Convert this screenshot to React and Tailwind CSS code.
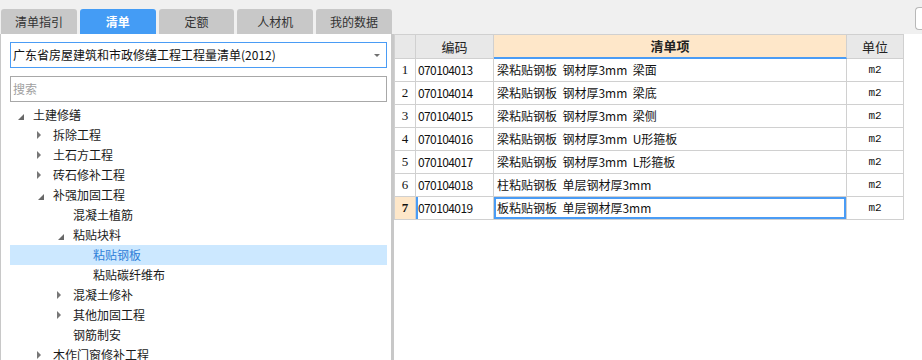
import React from 'react';

const tabs = ['清单指引', '清单', '定额', '人材机', '我的数据'];

const tree = [
  { level: 0, state: 'open', label: '土建修缮' },
  { level: 1, state: 'closed', label: '拆除工程' },
  { level: 1, state: 'closed', label: '土石方工程' },
  { level: 1, state: 'closed', label: '砖石修补工程' },
  { level: 1, state: 'open', label: '补强加固工程' },
  { level: 2, state: 'leaf', label: '混凝土植筋' },
  { level: 2, state: 'open', label: '粘贴块料' },
  { level: 3, state: 'leaf', label: '粘贴钢板', selected: true },
  { level: 3, state: 'leaf', label: '粘贴碳纤维布' },
  { level: 2, state: 'closed', label: '混凝土修补' },
  { level: 2, state: 'closed', label: '其他加固工程' },
  { level: 2, state: 'leaf', label: '钢筋制安' },
  { level: 1, state: 'closed', label: '木作门窗修补工程' },
];

const indent = ['pl-[3px]', 'pl-[23px]', 'pl-[43px]', 'pl-[63px]'];

const rows = [
  { code: '070104013', name: '梁粘贴钢板  钢材厚3mm  梁面' },
  { code: '070104014', name: '梁粘贴钢板  钢材厚3mm  梁底' },
  { code: '070104015', name: '梁粘贴钢板  钢材厚3mm  梁侧' },
  { code: '070104016', name: '梁粘贴钢板  钢材厚3mm  U形箍板' },
  { code: '070104017', name: '梁粘贴钢板  钢材厚3mm  L形箍板' },
  { code: '070104018', name: '柱粘贴钢板  单层钢材厚3mm' },
  { code: '070104019', name: '板粘贴钢板  单层钢材厚3mm' },
];

const TreeArrow = ({ state }) => {
  if (state === 'open') {
    return (
      <svg width="6" height="6" viewBox="0 0 6 6" className="ml-[5px] mt-[3px]">
        <polygon points="6,0 6,6 0,6" fill="#686868" />
      </svg>
    );
  }
  if (state === 'closed') {
    return (
      <svg width="4" height="8" viewBox="0 0 4 8" className="ml-[4px]">
        <polygon points="0,0 4,4 0,8" fill="#777777" />
      </svg>
    );
  }
  return null;
};

const LeftPanel = () => (
  <div className="flex w-[392px] shrink-0 flex-col">
    <div className="flex h-[34px] shrink-0 items-end gap-[3px] pl-[1px]">
      {tabs.map((t, i) => (
        <div
          key={t}
          className={
            'flex h-[25px] w-[77px] items-center justify-center rounded-t-[3px] text-[12px] ' +
            (i === 1 ? 'bg-[#449cf5] font-bold text-white' : 'bg-[#c8c8c8] text-[#333333]')
          }
        >
          {t}
        </div>
      ))}
    </div>

    <div className="flex flex-1 flex-col border-x border-[#c8c8c8] bg-white pl-[9px] pr-[4px] pt-[8px]">
      <div className="flex h-[26px] items-center justify-between border border-[#4a9cf5] pl-[2px] pr-[6px] text-[12px] text-[#111111]">
        <span>广东省房屋建筑和市政修缮工程工程量清单(2012)</span>
        <svg width="6" height="3" viewBox="0 0 6 3">
          <polygon points="0,0 6,0 3,3" fill="#707070" />
        </svg>
      </div>

      <div className="mt-[8px] flex h-[26px] items-center border border-[#a8a8a8] pl-[2px] text-[12px] text-[#a0a0a0]">
        搜索
      </div>

      <div className="mt-[3px] flex flex-col">
        {tree.map((n) => (
          <div
            key={n.label}
            className={
              'flex h-[20px] items-center text-[12px] ' +
              indent[n.level] +
              (n.selected ? ' bg-[#cce8ff] text-[#2f80d8]' : ' text-[#1a1a1a]')
            }
          >
            <div className="flex h-full w-[20px] shrink-0 items-center">
              <TreeArrow state={n.state} />
            </div>
            <span>{n.label}</span>
          </div>
        ))}
      </div>
    </div>
  </div>
);

const RightPanel = () => (
  <div className="flex flex-1 flex-col">
    <div className="flex h-[34px] shrink-0 justify-end pt-[7px]">
      <div className="h-[23px] w-[7px] rounded-l-[4px] border-y border-l border-[#b8b8b8] bg-white" />
    </div>

    <div className="flex-1 border-l-2 border-[#c8c8c8] bg-white">
      <div className="w-[510px] border-l border-t border-[#d0d0d0]">
        <div className="flex h-[24px] text-[13px] text-[#222222]">
          <div className="w-[21px] border-b border-r border-[#d0d0d0] bg-[#e8e8e8]" />
          <div className="flex w-[78px] items-center justify-center border-b border-r border-[#d0d0d0] bg-[#e8e8e8]">
            编码
          </div>
          <div className="flex w-[353px] items-center justify-center border-b-2 border-r border-b-[#4a9cf5] border-r-[#d0d0d0] bg-[#fee7c9] font-bold">
            清单项
          </div>
          <div className="flex w-[57px] items-center justify-center border-b border-r border-[#d0d0d0] bg-[#e8e8e8]">
            单位
          </div>
        </div>

        {rows.map((r, i) => {
          const sel = i === rows.length - 1;
          return (
            <div key={r.code} className="flex h-[23px] text-[12px] text-[#111111]">
              <div
                className={
                  "flex w-[21px] items-center justify-center border-b border-r border-[#d0d0d0] text-[13px] [font-family:'Liberation_Serif',serif] " +
                  (sel ? 'bg-[#fee7c9] font-bold' : 'bg-white')
                }
              >
                {i + 1}
              </div>
              <div
                className={
                  'flex w-[78px] items-center border-b border-r border-[#d0d0d0] pl-[2px] tracking-[-0.6px] ' +
                  (sel ? 'shadow-[inset_2px_0_0_#4a9cf5]' : '')
                }
              >
                {r.code}
              </div>
              <div
                className={
                  'flex w-[353px] items-center whitespace-pre border-b border-r border-[#d0d0d0] pl-[3px] ' +
                  (sel ? 'shadow-[inset_0_0_0_2px_#4a9cf5]' : '')
                }
              >
                {r.name}
              </div>
              <div className="flex w-[57px] items-center justify-center border-b border-r border-[#d0d0d0] text-[11px] [font-family:'Liberation_Mono',monospace]">
                m2
              </div>
            </div>
          );
        })}
      </div>
    </div>
  </div>
);

export default function App() {
  return (
    <div className="flex h-[360px] w-[922px] overflow-hidden bg-[#f0f0f0] [font-family:'Noto_Sans_CJK_SC',sans-serif]">
      <LeftPanel />
      <RightPanel />
    </div>
  );
}
